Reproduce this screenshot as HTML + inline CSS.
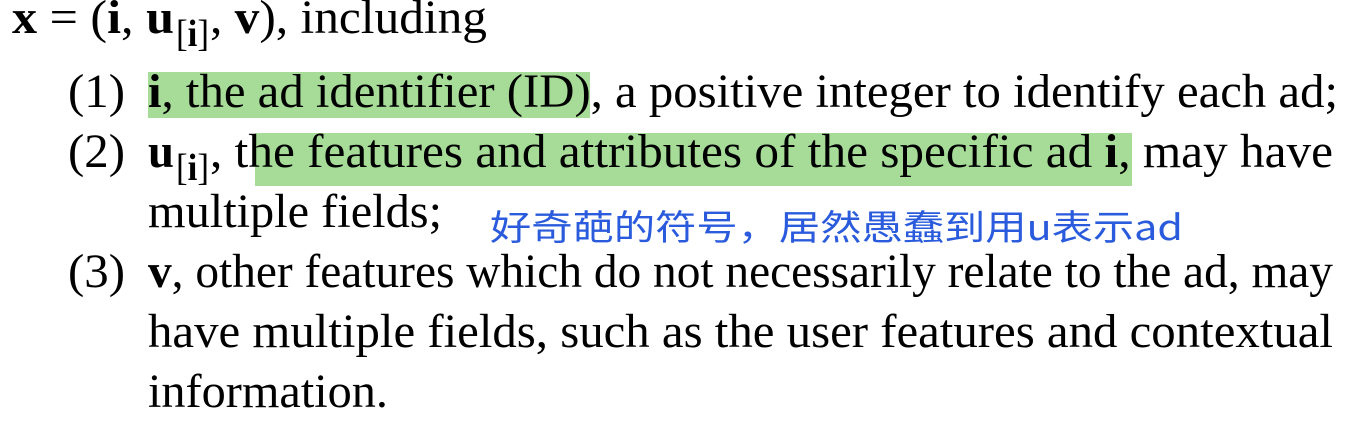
<!DOCTYPE html>
<html><head><meta charset="utf-8"><style>
html,body{margin:0;padding:0;background:#fff;width:1360px;height:434px;overflow:hidden}
svg{display:block}
text{font-family:"Liberation Serif",serif;font-size:48px;fill:#000}
.b{font-weight:bold}
.s{font-size:38px}
.cn{font-family:"Noto Sans CJK SC",sans-serif;font-size:35px;fill:#2a5bdc}
</style></head><body>
<svg width="1360" height="434" xmlns="http://www.w3.org/2000/svg">
<rect x="148" y="72" width="442" height="46" fill="#a6dc98"/>
<rect x="255" y="133" width="877" height="53" fill="#a6dc98"/>

<text x="12" y="33" textLength="162" lengthAdjust="spacingAndGlyphs"><tspan class="b">x</tspan> = (<tspan class="b">i</tspan>, <tspan class="b">u</tspan></text>
<text class="s" x="176" y="46" textLength="33" lengthAdjust="spacingAndGlyphs">[<tspan class="b">i</tspan>]</text>
<text x="210" y="33" textLength="277" lengthAdjust="spacingAndGlyphs">, <tspan class="b">v</tspan>), including</text>

<text x="68" y="107" textLength="57" lengthAdjust="spacingAndGlyphs">(1)</text>
<text x="148" y="107" textLength="1190" lengthAdjust="spacingAndGlyphs"><tspan class="b">i</tspan>, the ad identifier (ID), a positive integer to identify each ad;</text>

<text x="68" y="167" textLength="57" lengthAdjust="spacingAndGlyphs">(2)</text>
<text x="148" y="167" class="b" textLength="26" lengthAdjust="spacingAndGlyphs">u</text>
<text class="s" x="176" y="180" textLength="33" lengthAdjust="spacingAndGlyphs">[<tspan class="b">i</tspan>]</text>
<text x="210" y="167" textLength="1123" lengthAdjust="spacingAndGlyphs">, the features and attributes of the specific ad <tspan class="b">i</tspan>, may have</text>

<text x="148" y="227" textLength="294" lengthAdjust="spacingAndGlyphs">multiple fields;</text>
<text class="cn" x="490" y="240" textLength="693" lengthAdjust="spacingAndGlyphs">好奇葩的符号，居然愚蠢到用u表示ad</text>

<text x="68" y="287" textLength="57" lengthAdjust="spacingAndGlyphs">(3)</text>
<text x="148" y="287" textLength="1185" lengthAdjust="spacingAndGlyphs"><tspan class="b">v</tspan>, other features which do not necessarily relate to the ad, may</text>
<text x="148" y="347" textLength="1185" lengthAdjust="spacingAndGlyphs">have multiple fields, such as the user features and contextual</text>
<text x="148" y="407" textLength="240" lengthAdjust="spacingAndGlyphs">information.</text>
</svg>
</body></html>
